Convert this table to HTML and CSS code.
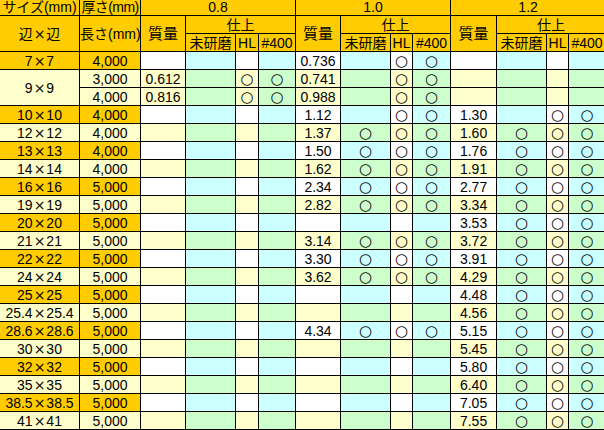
FILE: index.html
```html
<!DOCTYPE html>
<html lang="ja">
<head>
<meta charset="utf-8">
<title>角パイプ 規格表</title>
<link rel="stylesheet" href="styles.css">
</head>
<body>
<table class="spec">
  <colgroup>
    <col class="w80"><col class="w61"><col class="w45"><col class="w50"><col class="w23"><col class="w37">
    <col class="w45"><col class="w50"><col class="w22"><col class="w38">
    <col class="w46"><col class="w50"><col class="w22"><col class="w37">
  </colgroup>
  <thead>
    <tr class="hr">
      <th>サイズ(mm)</th>
      <th class="tight">厚さ(mm)</th>
      <th colspan="4">0.8</th>
      <th colspan="4">1.0</th>
      <th colspan="4">1.2</th>
    </tr>
    <tr class="hr">
      <th rowspan="2">辺<span class="x">×</span>辺</th>
      <th rowspan="2">長さ(mm)</th>
      <th rowspan="2" class="big">質量</th>
      <th colspan="3">仕上</th>
      <th rowspan="2" class="big">質量</th>
      <th colspan="3">仕上</th>
      <th rowspan="2" class="big">質量</th>
      <th colspan="3">仕上</th>
    </tr>
    <tr class="hr">
      <th>未研磨</th><th>HL</th><th>#400</th>
      <th>未研磨</th><th>HL</th><th>#400</th>
      <th>未研磨</th><th>HL</th><th>#400</th>
    </tr>
  </thead>
  <tbody>
    <tr class="a"><td class="s">7<span class="x">×</span>7</td><td class="s">4,000</td>
      <td class="m"></td><td class="u"></td><td class="h"></td><td class="p"></td>
      <td class="m">0.736</td><td class="u"></td><td class="h o">○</td><td class="p o">○</td>
      <td class="m"></td><td class="u"></td><td class="h"></td><td class="p"></td></tr>
    <tr class="b"><td class="s" rowspan="2">9<span class="x">×</span>9</td><td class="s">3,000</td>
      <td class="m">0.612</td><td class="u"></td><td class="h o">○</td><td class="p o">○</td>
      <td class="m">0.741</td><td class="u"></td><td class="h o">○</td><td class="p o">○</td>
      <td class="m"></td><td class="u"></td><td class="h"></td><td class="p"></td></tr>
    <tr class="b"><td class="s">4,000</td>
      <td class="m">0.816</td><td class="u"></td><td class="h o">○</td><td class="p o">○</td>
      <td class="m">0.988</td><td class="u"></td><td class="h o">○</td><td class="p o">○</td>
      <td class="m"></td><td class="u"></td><td class="h"></td><td class="p"></td></tr>
    <tr class="a"><td class="s">10<span class="x">×</span>10</td><td class="s">4,000</td>
      <td class="m"></td><td class="u"></td><td class="h"></td><td class="p"></td>
      <td class="m">1.12</td><td class="u"></td><td class="h o">○</td><td class="p o">○</td>
      <td class="m">1.30</td><td class="u"></td><td class="h o">○</td><td class="p o">○</td></tr>
    <tr class="b"><td class="s">12<span class="x">×</span>12</td><td class="s">4,000</td>
      <td class="m"></td><td class="u"></td><td class="h"></td><td class="p"></td>
      <td class="m">1.37</td><td class="u o">○</td><td class="h o">○</td><td class="p o">○</td>
      <td class="m">1.60</td><td class="u o">○</td><td class="h o">○</td><td class="p o">○</td></tr>
    <tr class="a"><td class="s">13<span class="x">×</span>13</td><td class="s">4,000</td>
      <td class="m"></td><td class="u"></td><td class="h"></td><td class="p"></td>
      <td class="m">1.50</td><td class="u o">○</td><td class="h o">○</td><td class="p o">○</td>
      <td class="m">1.76</td><td class="u o">○</td><td class="h o">○</td><td class="p o">○</td></tr>
    <tr class="b"><td class="s">14<span class="x">×</span>14</td><td class="s">4,000</td>
      <td class="m"></td><td class="u"></td><td class="h"></td><td class="p"></td>
      <td class="m">1.62</td><td class="u o">○</td><td class="h o">○</td><td class="p o">○</td>
      <td class="m">1.91</td><td class="u o">○</td><td class="h o">○</td><td class="p o">○</td></tr>
    <tr class="a"><td class="s">16<span class="x">×</span>16</td><td class="s">5,000</td>
      <td class="m"></td><td class="u"></td><td class="h"></td><td class="p"></td>
      <td class="m">2.34</td><td class="u o">○</td><td class="h o">○</td><td class="p o">○</td>
      <td class="m">2.77</td><td class="u o">○</td><td class="h o">○</td><td class="p o">○</td></tr>
    <tr class="b"><td class="s">19<span class="x">×</span>19</td><td class="s">5,000</td>
      <td class="m"></td><td class="u"></td><td class="h"></td><td class="p"></td>
      <td class="m">2.82</td><td class="u o">○</td><td class="h o">○</td><td class="p o">○</td>
      <td class="m">3.34</td><td class="u o">○</td><td class="h o">○</td><td class="p o">○</td></tr>
    <tr class="a"><td class="s">20<span class="x">×</span>20</td><td class="s">5,000</td>
      <td class="m"></td><td class="u"></td><td class="h"></td><td class="p"></td>
      <td class="m"></td><td class="u"></td><td class="h"></td><td class="p"></td>
      <td class="m">3.53</td><td class="u o">○</td><td class="h o">○</td><td class="p o">○</td></tr>
    <tr class="b"><td class="s">21<span class="x">×</span>21</td><td class="s">5,000</td>
      <td class="m"></td><td class="u"></td><td class="h"></td><td class="p"></td>
      <td class="m">3.14</td><td class="u o">○</td><td class="h o">○</td><td class="p o">○</td>
      <td class="m">3.72</td><td class="u o">○</td><td class="h o">○</td><td class="p o">○</td></tr>
    <tr class="a"><td class="s">22<span class="x">×</span>22</td><td class="s">5,000</td>
      <td class="m"></td><td class="u"></td><td class="h"></td><td class="p"></td>
      <td class="m">3.30</td><td class="u o">○</td><td class="h o">○</td><td class="p o">○</td>
      <td class="m">3.91</td><td class="u o">○</td><td class="h o">○</td><td class="p o">○</td></tr>
    <tr class="b"><td class="s">24<span class="x">×</span>24</td><td class="s">5,000</td>
      <td class="m"></td><td class="u"></td><td class="h"></td><td class="p"></td>
      <td class="m">3.62</td><td class="u o">○</td><td class="h o">○</td><td class="p o">○</td>
      <td class="m">4.29</td><td class="u o">○</td><td class="h o">○</td><td class="p o">○</td></tr>
    <tr class="a"><td class="s">25<span class="x">×</span>25</td><td class="s">5,000</td>
      <td class="m"></td><td class="u"></td><td class="h"></td><td class="p"></td>
      <td class="m"></td><td class="u"></td><td class="h"></td><td class="p"></td>
      <td class="m">4.48</td><td class="u o">○</td><td class="h o">○</td><td class="p o">○</td></tr>
    <tr class="b"><td class="s">25.4<span class="x">×</span>25.4</td><td class="s">5,000</td>
      <td class="m"></td><td class="u"></td><td class="h"></td><td class="p"></td>
      <td class="m"></td><td class="u"></td><td class="h"></td><td class="p"></td>
      <td class="m">4.56</td><td class="u o">○</td><td class="h o">○</td><td class="p o">○</td></tr>
    <tr class="a"><td class="s">28.6<span class="x">×</span>28.6</td><td class="s">5,000</td>
      <td class="m"></td><td class="u"></td><td class="h"></td><td class="p"></td>
      <td class="m">4.34</td><td class="u o">○</td><td class="h o">○</td><td class="p o">○</td>
      <td class="m">5.15</td><td class="u o">○</td><td class="h o">○</td><td class="p o">○</td></tr>
    <tr class="b"><td class="s">30<span class="x">×</span>30</td><td class="s">5,000</td>
      <td class="m"></td><td class="u"></td><td class="h"></td><td class="p"></td>
      <td class="m"></td><td class="u"></td><td class="h"></td><td class="p"></td>
      <td class="m">5.45</td><td class="u o">○</td><td class="h o">○</td><td class="p o">○</td></tr>
    <tr class="a"><td class="s">32<span class="x">×</span>32</td><td class="s">5,000</td>
      <td class="m"></td><td class="u"></td><td class="h"></td><td class="p"></td>
      <td class="m"></td><td class="u"></td><td class="h"></td><td class="p"></td>
      <td class="m">5.80</td><td class="u o">○</td><td class="h o">○</td><td class="p o">○</td></tr>
    <tr class="b"><td class="s">35<span class="x">×</span>35</td><td class="s">5,000</td>
      <td class="m"></td><td class="u"></td><td class="h"></td><td class="p"></td>
      <td class="m"></td><td class="u"></td><td class="h"></td><td class="p"></td>
      <td class="m">6.40</td><td class="u o">○</td><td class="h o">○</td><td class="p o">○</td></tr>
    <tr class="a"><td class="s">38.5<span class="x">×</span>38.5</td><td class="s">5,000</td>
      <td class="m"></td><td class="u"></td><td class="h"></td><td class="p"></td>
      <td class="m"></td><td class="u"></td><td class="h"></td><td class="p"></td>
      <td class="m">7.05</td><td class="u o">○</td><td class="h o">○</td><td class="p o">○</td></tr>
    <tr class="b"><td class="s">41<span class="x">×</span>41</td><td class="s">5,000</td>
      <td class="m"></td><td class="u"></td><td class="h"></td><td class="p"></td>
      <td class="m"></td><td class="u"></td><td class="h"></td><td class="p"></td>
      <td class="m">7.55</td><td class="u o">○</td><td class="h o">○</td><td class="p o">○</td></tr>
  </tbody>
</table>
</body>
</html>
```
FILE: styles.css
```css
html, body {
  margin: 0;
  padding: 0;
  background: #ffffff;
  overflow: hidden;
}

.spec {
  margin-top: -2px;
  border-collapse: separate;
  border-spacing: 0;
  table-layout: fixed;
  width: 606px;
  font-family: "Liberation Sans", "Noto Sans CJK JP", sans-serif;
  font-size: 14px;
  color: #000;
}

.w80 { width: 80px; }
.w61 { width: 61px; }
.w45 { width: 45px; }
.w50 { width: 50px; }
.w23 { width: 23px; }
.w37 { width: 37px; }
.w22 { width: 22px; }
.w38 { width: 38px; }
.w46 { width: 46px; }

.spec th,
.spec td {
  box-sizing: border-box;
  padding: 0;
  border-right: 1px solid #000;
  border-bottom: 1px solid #000;
  text-align: center;
  vertical-align: middle;
  line-height: 16px;
  white-space: nowrap;
  overflow: visible;
  font-weight: normal;
}

.spec tr {
  height: 18px;
}

.spec th {
  background: #ffcc00;
}

.spec th.big {
  font-size: 15px;
}

.tight {
  letter-spacing: -0.6px;
}

.x {
  font-family: "DejaVu Sans", sans-serif;
  padding: 0 1px;
}

.spec td.o {
  font-family: "DejaVu Sans", "Noto Sans CJK JP", sans-serif;
  font-size: 15px;
}

.a .s { background: #ffcc00; }
.b .s { background: #ffffcc; }

.a .m, .a .h { background: #ffffff; }
.a .u, .a .p { background: #ccffff; }
.b .m, .b .h { background: #ffffcc; }
.b .u, .b .p { background: #ccffcc; }
```
